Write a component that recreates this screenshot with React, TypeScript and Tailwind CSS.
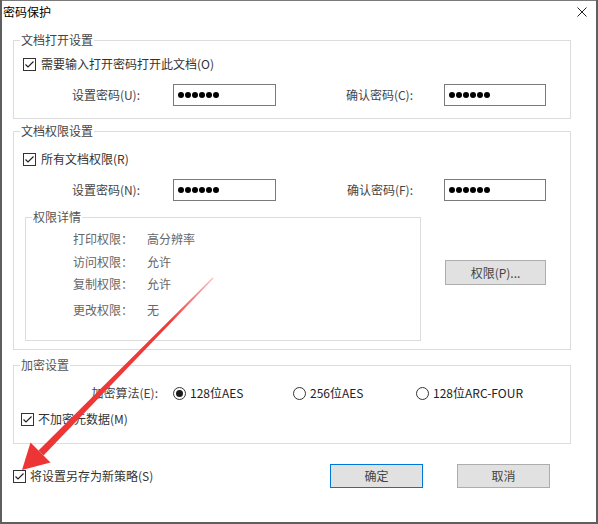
import React from 'react';

function CheckBox() {
  return (
    <span className="flex h-[13px] w-[13px] shrink-0 items-center justify-center border border-[#333] bg-white">
      <svg width="11" height="11" viewBox="0 0 11 11">
        <polyline points="1.5,5.5 4,8 9.5,2.5" fill="none" stroke="#222" strokeWidth="1.2" />
      </svg>
    </span>
  );
}

function Radio({ on }: { on?: boolean }) {
  return (
    <svg width="13" height="13" viewBox="0 0 13 13" className="shrink-0">
      <circle cx="6.5" cy="6.5" r="6" fill="#fff" stroke="#333" strokeWidth="1" />
      {on && <circle cx="6.5" cy="6.5" r="3.5" fill="#1a1a1a" />}
    </svg>
  );
}

function PasswordBox({ w }: { w: string }) {
  return (
    <div className={`flex h-[22px] items-center gap-[1px] border border-[#7a7a7a] bg-white pl-[4px] ${w}`}>
      {[0, 1, 2, 3, 4, 5].map((i) => (
        <span key={i} className="h-[6px] w-[6px] rounded-full bg-black" />
      ))}
    </div>
  );
}

function PasswordRow({ left, right }: { left: string; right: string }) {
  return (
    <div className="mt-[12px] flex h-[22px] items-center">
      <span className="w-[126px] text-right text-[#444]">{left}</span>
      <div className="ml-[33px]">
        <PasswordBox w="w-[103px]" />
      </div>
      <span className="w-[137px] text-right text-[#444]">{right}</span>
      <div className="ml-[31px]">
        <PasswordBox w="w-[102px]" />
      </div>
    </div>
  );
}

export default function App() {
  const details = [
    { k: '打印权限：', v: '高分辨率', mt: 'mt-[6px]' },
    { k: '访问权限：', v: '允许', mt: 'mt-[7px]' },
    { k: '复制权限：', v: '允许', mt: 'mt-[6px]' },
    { k: '更改权限：', v: '无', mt: 'mt-[10px]' },
  ];

  return (
    <div className="relative h-[524px] w-[598px] overflow-hidden bg-white font-['Noto_Sans_CJK_SC','Microsoft_YaHei',sans-serif] text-[12px] leading-4 text-[#333] shadow-[inset_2px_0_0_#5f5f5f,inset_-2px_0_0_#5f5f5f,inset_0_-2px_0_#5f5f5f,inset_0_1px_0_#7a7a7a]">
      {/* Title bar */}
      <div className="flex h-[24px] items-center justify-between pl-[3px] pr-[11px]">
        <span className="text-black">密码保护</span>
        <svg width="10" height="10" viewBox="0 0 10 10">
          <path d="M0.5 0.5 L9.5 9.5 M9.5 0.5 L0.5 9.5" stroke="#222" strokeWidth="1" />
        </svg>
      </div>

      {/* 文档打开设置 */}
      <fieldset className="mt-[8px] ml-[13px] w-[558px] border border-[#dcdcdc] pb-[12px]">
        <legend className="ml-[6px] px-[1px] leading-4 text-[#444]">文档打开设置</legend>
        <div className="mt-[8px] flex h-[16px] items-center pl-[9px]">
          <CheckBox />
          <span className="ml-[5px]">需要输入打开密码打开此文档(O)</span>
        </div>
        <PasswordRow left="设置密码(U):" right="确认密码(C):" />
      </fieldset>

      {/* 文档权限设置 */}
      <fieldset className="mt-[4px] ml-[13px] w-[558px] border border-[#dcdcdc] pb-[8px]">
        <legend className="ml-[6px] px-[1px] leading-4 text-[#444]">文档权限设置</legend>
        <div className="mt-[12px] flex h-[16px] items-center pl-[9px]">
          <CheckBox />
          <span className="ml-[5px]">所有文档权限(R)</span>
        </div>
        <PasswordRow left="设置密码(N):" right="确认密码(F):" />
        <div className="mt-[8px] flex">
          <fieldset className="ml-[11px] w-[396px] border border-[#dcdcdc] pb-[22px]">
            <legend className="ml-[6px] px-[1px] leading-4 text-[#555]">权限详情</legend>
            {details.map((d) => (
              <div key={d.k} className={`flex h-[16px] items-center pl-[47px] text-[#666] ${d.mt}`}>
                <span className="w-[74px]">{d.k}</span>
                <span>{d.v}</span>
              </div>
            ))}
          </fieldset>
          <button className="mt-[51px] ml-[24px] h-[25px] w-[101px] self-start border border-[#adadad] bg-[#e1e1e1] text-[#444]">
            权限(P)...
          </button>
        </div>
      </fieldset>

      {/* 加密设置 */}
      <fieldset className="mt-[7px] ml-[13px] w-[558px] border border-[#dcdcdc] pb-[16px]">
        <legend className="ml-[6px] px-[1px] leading-4 text-[#555]">加密设置</legend>
        <div className="mt-[12px] flex h-[16px] items-center">
          <span className="w-[144px] text-right text-[#444]">加密算法(E):</span>
          <div className="ml-[15px] flex w-[120px] items-center gap-[4px]">
            <Radio on />
            <span className="text-[#222]">128位AES</span>
          </div>
          <div className="flex w-[123px] items-center gap-[4px]">
            <Radio />
            <span className="text-[#222]">256位AES</span>
          </div>
          <div className="flex items-center gap-[4px]">
            <Radio />
            <span className="text-[#222]">128位ARC-FOUR</span>
          </div>
        </div>
        <div className="mt-[10px] flex h-[16px] items-center pl-[7px]">
          <CheckBox />
          <span className="ml-[4px]">不加密元数据(M)</span>
        </div>
      </fieldset>

      {/* Footer */}
      <div className="mt-[20px] flex h-[24px] items-center pr-[48px]">
        <div className="ml-[13px] flex items-center">
          <CheckBox />
          <span className="ml-[4px]">将设置另存为新策略(S)</span>
        </div>
        <div className="ml-auto flex gap-[34px]">
          <button className="h-[24px] w-[93px] border border-[#0078d7] bg-[#e1e1e1] text-[#444]">确定</button>
          <button className="h-[24px] w-[93px] border border-[#adadad] bg-[#e1e1e1] text-[#444]">取消</button>
        </div>
      </div>

      {/* Annotation arrow */}
      <svg className="pointer-events-none absolute inset-0" width="598" height="524" viewBox="0 0 598 524">
        <defs>
          <linearGradient id="shaft" x1="213" y1="278" x2="41" y2="453" gradientUnits="userSpaceOnUse">
            <stop offset="0" stopColor="#f04040" stopOpacity="0.35" />
            <stop offset="0.25" stopColor="#f03a3a" stopOpacity="1" />
            <stop offset="1" stopColor="#ee3535" stopOpacity="1" />
          </linearGradient>
        </defs>
        <polygon points="213.4,278.4 212.6,277.6 38.5,450.5 43.5,455.5" fill="url(#shaft)" />
        <polygon points="22,470 30.5,442.5 50.5,462.5" fill="#ee3535" />
      </svg>
    </div>
  );
}
